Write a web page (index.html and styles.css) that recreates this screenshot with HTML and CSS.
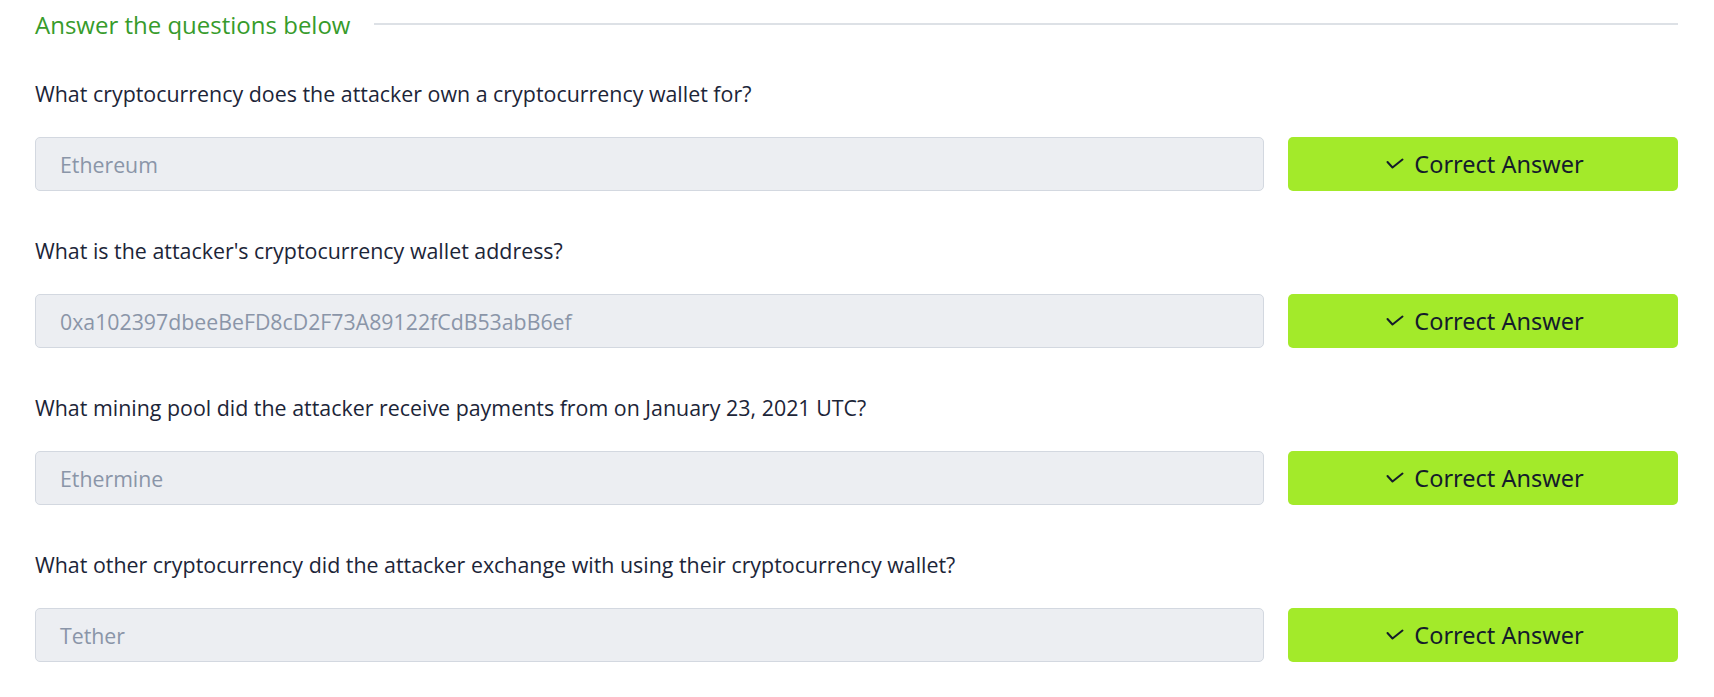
FILE: index.html
```html
<!DOCTYPE html>
<html lang="en">
<head>
<meta charset="utf-8">
<title>Answer the questions below</title>
<link rel="stylesheet" href="styles.css">
</head>
<body>
<div class="page">
  <div class="section-head">
    <h2 class="section-title">Answer the questions below</h2>
    <div class="section-rule"></div>
  </div>

  <div class="question">
    <p class="question-text">What cryptocurrency does the attacker own a cryptocurrency wallet for?</p>
    <div class="answer-row">
      <div class="answer-field">Ethereum</div>
      <button class="answer-btn"><svg class="check" viewBox="0 0 18 12" width="18" height="12"><path d="M1.5 4 L6.5 9.5 L16.5 1.5" fill="none" stroke="currentColor" stroke-width="2" stroke-linecap="round" stroke-linejoin="round"/></svg><span>Correct Answer</span></button>
    </div>
  </div>

  <div class="question">
    <p class="question-text">What is the attacker's cryptocurrency wallet address?</p>
    <div class="answer-row">
      <div class="answer-field">0xa102397dbeeBeFD8cD2F73A89122fCdB53abB6ef</div>
      <button class="answer-btn"><svg class="check" viewBox="0 0 18 12" width="18" height="12"><path d="M1.5 4 L6.5 9.5 L16.5 1.5" fill="none" stroke="currentColor" stroke-width="2" stroke-linecap="round" stroke-linejoin="round"/></svg><span>Correct Answer</span></button>
    </div>
  </div>

  <div class="question">
    <p class="question-text">What mining pool did the attacker receive payments from on January 23, 2021 UTC?</p>
    <div class="answer-row">
      <div class="answer-field">Ethermine</div>
      <button class="answer-btn"><svg class="check" viewBox="0 0 18 12" width="18" height="12"><path d="M1.5 4 L6.5 9.5 L16.5 1.5" fill="none" stroke="currentColor" stroke-width="2" stroke-linecap="round" stroke-linejoin="round"/></svg><span>Correct Answer</span></button>
    </div>
  </div>

  <div class="question">
    <p class="question-text">What other cryptocurrency did the attacker exchange with using their cryptocurrency wallet?</p>
    <div class="answer-row">
      <div class="answer-field">Tether</div>
      <button class="answer-btn"><svg class="check" viewBox="0 0 18 12" width="18" height="12"><path d="M1.5 4 L6.5 9.5 L16.5 1.5" fill="none" stroke="currentColor" stroke-width="2" stroke-linecap="round" stroke-linejoin="round"/></svg><span>Correct Answer</span></button>
    </div>
  </div>
</div>
</body>
</html>
```

FILE: styles.css
```css
html, body {
  margin: 0;
  padding: 0;
  background: #ffffff;
}

body {
  font-family: "Open Sans", "Noto Sans", sans-serif;
  color: #1c2538;
}

.page {
  padding: 0 36px 0 35px;
}

.section-head {
  display: flex;
  align-items: center;
  gap: 24px;
  height: 48px;
}

.section-title {
  margin: 0;
  font-size: 24px;
  font-weight: 400;
  color: #379b2b;
  white-space: nowrap;
}

.section-rule {
  flex: 1;
  height: 2px;
  background: #dde1e6;
}

.question {
  padding-top: 31px;
}

.question-text {
  margin: 0 0 28px;
  font-size: 21.4px;
  line-height: 30px;
  color: #1c2538;
}

.answer-row {
  display: flex;
  gap: 24px;
  height: 54px;
  margin-bottom: 14px;
}

.answer-field {
  flex: 1;
  box-sizing: border-box;
  display: flex;
  align-items: center;
  padding: 0 24px;
  background: #eceef2;
  border: 1.5px solid #d3d8e0;
  border-radius: 5px;
  font-size: 21.3px;
  color: #8a95a8;
}

.answer-btn {
  width: 390px;
  flex: none;
  box-sizing: border-box;
  display: flex;
  align-items: center;
  justify-content: center;
  gap: 10px;
  border: none;
  border-radius: 5px;
  background: #a3ea2a;
  color: #151c2b;
  font-family: "Noto Sans", "Open Sans", sans-serif;
  font-size: 23.5px;
  padding: 0 0 0 4px;
}

.check {
  display: block;
}
```
